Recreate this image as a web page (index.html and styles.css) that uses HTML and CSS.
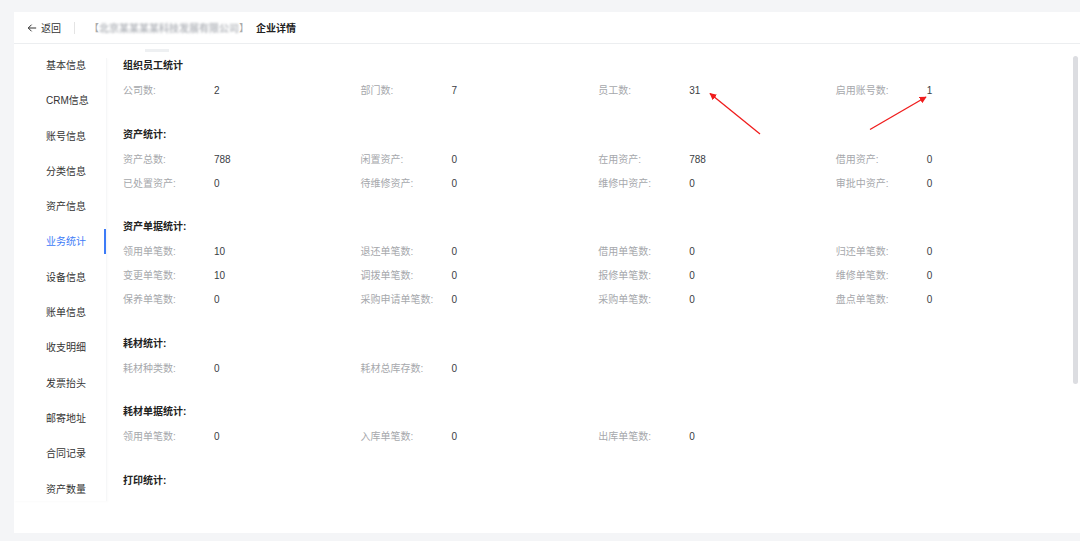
FILE: index.html
```html
<!DOCTYPE html>
<html lang="zh">
<head>
<meta charset="utf-8">
<title>企业详情</title>
<link rel="stylesheet" href="styles.css">
</head>
<body>
<div class="page">
  <div class="card">
    <div class="header">
      <span class="back"><svg class="back-icon" viewBox="0 0 12 12" width="10" height="10"><path d="M11 6H1.5M5.5 2L1.5 6l4 4" fill="none" stroke="#333" stroke-width="1.2"/></svg>返回</span>
      <span class="divider"></span>
      <span class="bracket">【</span><span class="company">北京某某某某科技发展有限公司</span><span class="bracket">】</span>
      <span class="title">企业详情</span>
    </div>
    <div class="body">
      <div class="sidebar">
        <ul class="menu">
          <li>基本信息</li>
          <li>CRM信息</li>
          <li>账号信息</li>
          <li>分类信息</li>
          <li>资产信息</li>
          <li class="active">业务统计</li>
          <li>设备信息</li>
          <li>账单信息</li>
          <li>收支明细</li>
          <li>发票抬头</li>
          <li>邮寄地址</li>
          <li>合同记录</li>
          <li>资产数量</li>
        </ul>
      </div>
      <div class="main">
        <div class="content">
          <div class="tab-mark"></div>
          <section class="section">
            <h3>组织员工统计</h3>
            <div class="grid">
              <div class="cell"><span class="label">公司数:</span><span class="value">2</span></div>
              <div class="cell"><span class="label">部门数:</span><span class="value">7</span></div>
              <div class="cell"><span class="label">员工数:</span><span class="value">31</span></div>
              <div class="cell"><span class="label">启用账号数:</span><span class="value">1</span></div>
            </div>
          </section>
          <section class="section">
            <h3>资产统计:</h3>
            <div class="grid">
              <div class="cell"><span class="label">资产总数:</span><span class="value">788</span></div>
              <div class="cell"><span class="label">闲置资产:</span><span class="value">0</span></div>
              <div class="cell"><span class="label">在用资产:</span><span class="value">788</span></div>
              <div class="cell"><span class="label">借用资产:</span><span class="value">0</span></div>
              <div class="cell"><span class="label">已处置资产:</span><span class="value">0</span></div>
              <div class="cell"><span class="label">待维修资产:</span><span class="value">0</span></div>
              <div class="cell"><span class="label">维修中资产:</span><span class="value">0</span></div>
              <div class="cell"><span class="label">审批中资产:</span><span class="value">0</span></div>
            </div>
          </section>
          <section class="section">
            <h3>资产单据统计:</h3>
            <div class="grid">
              <div class="cell"><span class="label">领用单笔数:</span><span class="value">10</span></div>
              <div class="cell"><span class="label">退还单笔数:</span><span class="value">0</span></div>
              <div class="cell"><span class="label">借用单笔数:</span><span class="value">0</span></div>
              <div class="cell"><span class="label">归还单笔数:</span><span class="value">0</span></div>
              <div class="cell"><span class="label">变更单笔数:</span><span class="value">10</span></div>
              <div class="cell"><span class="label">调拨单笔数:</span><span class="value">0</span></div>
              <div class="cell"><span class="label">报修单笔数:</span><span class="value">0</span></div>
              <div class="cell"><span class="label">维修单笔数:</span><span class="value">0</span></div>
              <div class="cell"><span class="label">保养单笔数:</span><span class="value">0</span></div>
              <div class="cell"><span class="label">采购申请单笔数:</span><span class="value">0</span></div>
              <div class="cell"><span class="label">采购单笔数:</span><span class="value">0</span></div>
              <div class="cell"><span class="label">盘点单笔数:</span><span class="value">0</span></div>
            </div>
          </section>
          <section class="section">
            <h3>耗材统计:</h3>
            <div class="grid">
              <div class="cell"><span class="label">耗材种类数:</span><span class="value">0</span></div>
              <div class="cell"><span class="label">耗材总库存数:</span><span class="value">0</span></div>
            </div>
          </section>
          <section class="section">
            <h3>耗材单据统计:</h3>
            <div class="grid">
              <div class="cell"><span class="label">领用单笔数:</span><span class="value">0</span></div>
              <div class="cell"><span class="label">入库单笔数:</span><span class="value">0</span></div>
              <div class="cell"><span class="label">出库单笔数:</span><span class="value">0</span></div>
            </div>
          </section>
          <section class="section">
            <h3>打印统计:</h3>
          </section>
        </div>
        <div class="scrollbar"><div class="thumb"></div></div>
      </div>
    </div>
  </div>
</div>
<svg class="arrows" width="1080" height="541" viewBox="0 0 1080 541">
  <defs>
    <marker id="ah" viewBox="0 0 10 10" refX="9" refY="5" markerWidth="7" markerHeight="7" markerUnits="userSpaceOnUse" orient="auto">
      <path d="M0 0L10 5L0 10z" fill="#f01c1c"/>
    </marker>
  </defs>
  <line x1="760" y1="134" x2="710" y2="93.5" stroke="#f01c1c" stroke-width="1.3" marker-end="url(#ah)"/>
  <line x1="870" y1="129.5" x2="926" y2="97" stroke="#f01c1c" stroke-width="1.3" marker-end="url(#ah)"/>
</svg>
</body>
</html>
```

FILE: styles.css
```css
* { box-sizing: border-box; }
html, body { margin: 0; padding: 0; }
body {
  background: #f4f5f7;
  font-family: "Liberation Sans", "Noto Sans CJK SC", sans-serif;
  color: #333;
  width: 1080px;
  height: 541px;
  overflow: hidden;
  position: relative;
}
.page {
  padding: 12px 0 8px 14px;
  height: 541px;
}
.card {
  background: #fff;
  height: 521px;
  display: flex;
  flex-direction: column;
}
.header {
  height: 32px;
  border-bottom: 1px solid #eceef0;
  display: flex;
  align-items: center;
  padding-left: 13px;
  font-size: 10px;
  flex-shrink: 0;
}
.back {
  display: flex;
  align-items: center;
  color: #333;
}
.back-icon { margin-right: 4px; }
.divider {
  width: 1px;
  height: 12px;
  background: #e4e4e4;
  margin: 0 14px 0 13px;
}
.bracket { color: #aaa; }
.company {
  color: #b8bbc0;
  filter: blur(1.2px);
  font-weight: bold;
}
.title {
  margin-left: 7px;
  font-weight: bold;
  color: #222;
}
.body {
  flex: 1;
  display: flex;
  min-height: 0;
}
.sidebar {
  width: 93px;
  margin-top: 14px;
  height: 443px;
  overflow: hidden;
  border-right: 1px solid #f6f7f8;
  box-shadow: 1px 1px 2px rgba(0,0,0,0.02);
  flex-shrink: 0;
}
.menu {
  list-style: none;
  margin: -10px 0 0 0;
  padding: 0;
}
.menu li {
  height: 35.3px;
  line-height: 35.3px;
  padding-left: 32px;
  font-size: 10px;
  color: #333;
  position: relative;
}
.menu li.active { color: #3d7bf7; }
.menu li.active::after {
  content: "";
  position: absolute;
  right: 0;
  top: 5px;
  width: 2px;
  height: 25px;
  background: #3d7bf7;
}
.main {
  flex: 1;
  display: flex;
  min-width: 0;
}
.content {
  flex: 1;
  padding-left: 16px;
  padding-top: 5px;
}
.tab-mark {
  width: 24px;
  height: 3px;
  background: #eef0f2;
  margin-left: 22px;
}
.section {
  margin-bottom: 21.5px;
}
.section h3 {
  margin: 4px 0 3px 0;
  height: 20px;
  line-height: 20px;
  font-size: 10px;
  font-weight: bold;
  color: #222;
}
.section + .section h3 { margin-top: 0; }
.grid {
  display: grid;
  grid-template-columns: repeat(4, 237.6px);
}
.cell {
  height: 24px;
  line-height: 24px;
  display: flex;
  font-size: 10px;
}
.label {
  width: 91px;
  color: #a6a8ac;
}
.value {
  color: #3a3d44;
}
.scrollbar {
  width: 7px;
  padding-top: 12px;
  flex-shrink: 0;
}
.thumb {
  width: 5px;
  height: 328px;
  background: #dcdde1;
  border-radius: 3px;
}
.arrows {
  position: absolute;
  left: 0;
  top: 0;
  pointer-events: none;
}
```
